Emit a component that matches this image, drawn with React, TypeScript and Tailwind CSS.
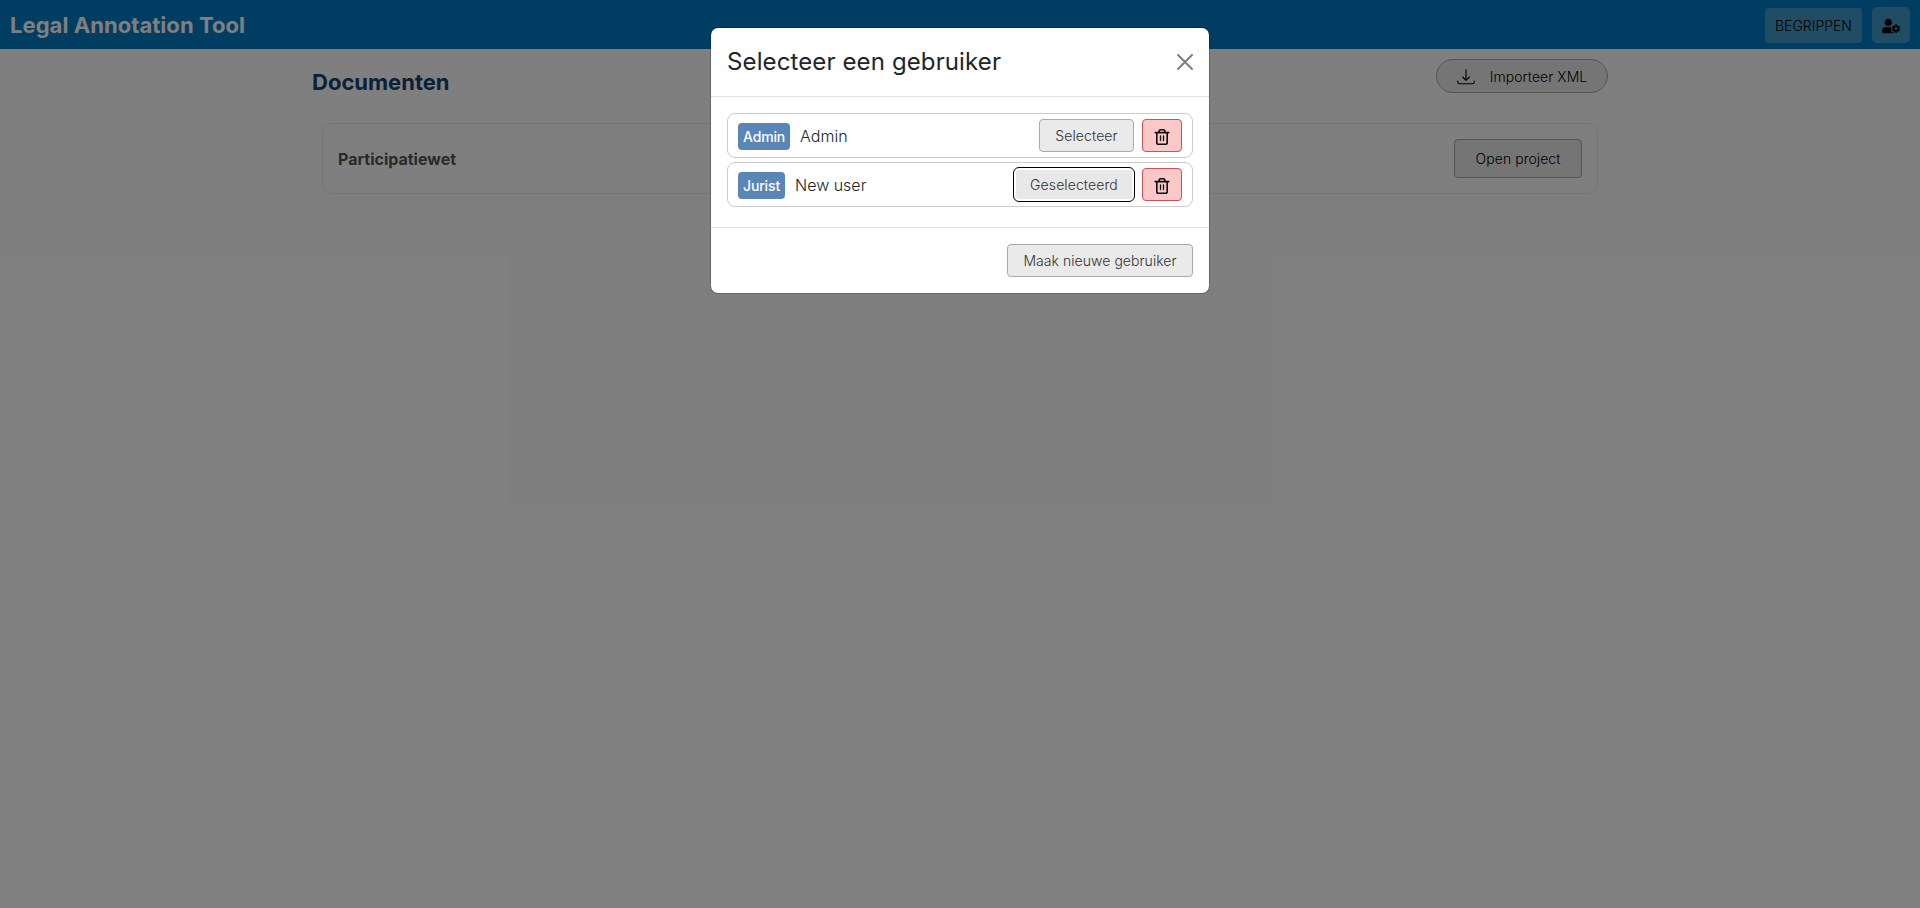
import React from "react";
import { FaUserCog } from "react-icons/fa";

function TrashIcon() {
  return (
    <svg width="16" height="18" viewBox="0 0 16 18" fill="none" stroke="#0b0b0b" strokeWidth="1.6" strokeLinecap="round" strokeLinejoin="round">
      <path d="M1.2 4.6h13.6M2.8 4.8v9.9a1.6 1.6 0 0 0 1.6 1.6h7.2a1.6 1.6 0 0 0 1.6-1.6V4.8M4.9 4.4l.4-1.8a1 1 0 0 1 1-.9h3.4a1 1 0 0 1 1 .9l.4 1.8" />
      <path d="M6.5 8v4.6M9.5 8v4.6" strokeWidth="1.3" />
    </svg>
  );
}

function DownloadIcon() {
  return (
    <svg width="18" height="16" viewBox="0 0 18 16" fill="none" stroke="#000" strokeWidth="1.1" strokeLinecap="round" strokeLinejoin="round">
      <path d="M9 .7v10.6M5.600 8 9 11.400 12.400 8" />
      <path d="M.8 12v1.300a1.400 1.400 0 0 0 1.400 1.400h13.600a1.400 1.400 0 0 0 1.400-1.400V12" />
    </svg>
  );
}

const button =
  "flex items-center justify-center rounded border border-[#aaa] bg-[#eaeaea] text-[#333]";

function UserRow({ role, name, selected }: { role: string; name: string; selected?: boolean }) {
  return (
    <div className="flex h-[45px] items-center rounded-lg border border-[#ccc] pr-[10px] pl-[10px]">
      <span className="mt-[2px] flex h-[27px] items-center rounded bg-[#5985b7] px-[5px] pt-[1px] text-sm font-medium tracking-[-0.15px] text-white">
        {role}
      </span>
      <span className="ml-[10px] text-base font-light text-[#212529]">{name}</span>
      <button
        className={
          selected
            ? "ml-auto flex h-[35px] w-[122px] items-center justify-center rounded-md border border-black bg-[#e8e8e8] text-sm font-light tracking-[0.1px] text-[#333] shadow-[inset_0_0_0_2px_#fff]"
            : `${button} ml-auto mr-px h-[33px] w-[95px] text-sm font-light tracking-[0.1px]`
        }
      >
        {selected ? "Geselecteerd" : "Selecteer"}
      </button>
      <button aria-label="Verwijder" className="ml-[7px] flex h-[33px] w-10 items-center justify-center rounded border border-[#d14f51] bg-[#fac8c8] pt-[3px]">
        <TrashIcon />
      </button>
    </div>
  );
}

export default function App() {
  return (
    <div className="grid h-[908px] bg-white font-[Inter,sans-serif]">
      <div className="col-start-1 row-start-1">
        <header className="flex h-[49px] items-center bg-[#007bc4] pr-[10px] pl-[10px]">
          <h1 className="mt-[2px] text-[22px] font-bold tracking-[0.05px] text-white">Legal Annotation Tool</h1>
          <button className="mt-[2px] ml-auto flex h-[35px] w-[97px] items-center justify-center rounded bg-[#439ac8] text-sm font-light text-black">
            BEGRIPPEN
          </button>
          <button aria-label="Gebruiker" className="mt-px ml-[10px] flex h-9 w-[38px] items-center justify-center rounded-[5px] bg-[#439ac8] pt-[2px] text-[18px] text-black">
            <FaUserCog />
          </button>
        </header>
        <main className="mx-auto w-[1296px]">
          <div className="flex justify-between pt-[10px]">
            <h2 className="mt-[7px] text-[22px] leading-8 font-bold text-[#154273]">Documenten</h2>
            <button className="flex h-[34px] w-[172px] items-center justify-center gap-[15px] rounded-full border border-[#aaa] bg-[#eaeaea] pt-px text-sm font-light tracking-[0.05px] text-black">
              <DownloadIcon />
              Importeer XML
            </button>
          </div>
          <div className="mx-[10px] mt-[25px] flex h-[71px] items-center justify-between rounded-[10px] border border-[#eaeaea] px-[15px]">
            <span className="text-base font-bold text-[#555]">Participatiewet</span>
            <button className="flex h-[39px] w-[128px] items-center justify-center rounded border border-[#aaa] bg-[#eaeaea] text-sm font-light tracking-[0.05px] text-black">
              Open project
            </button>
          </div>
        </main>
      </div>
      <div className="z-10 col-start-1 row-start-1 bg-black/50 pt-[27px]">
        <section className="mx-auto w-[500px] rounded-lg border border-black/20 bg-white bg-clip-padding">
          <div className="flex h-[69px] items-center justify-between border-b border-[#dee2e6] px-4">
            <h2 className="text-2xl font-normal tracking-[0.12px] text-[#212529]">Selecteer een gebruiker</h2>
            <svg className="opacity-50" width="16" height="16" viewBox="0 0 16 16" stroke="#000" strokeWidth="2" strokeLinecap="round">
              <path d="m1 1 14 14M15 1 1 15" />
            </svg>
          </div>
          <div className="flex flex-col gap-1 p-4 pb-5">
            <UserRow role="Admin" name="Admin" />
            <UserRow role="Jurist" name="New user" selected />
          </div>
          <div className="flex justify-end border-t border-[#dee2e6] p-4">
            <button className={`${button} h-[33px] w-[186px] text-sm font-light tracking-[0.05px]`}>
              Maak nieuwe gebruiker
            </button>
          </div>
        </section>
      </div>
    </div>
  );
}
